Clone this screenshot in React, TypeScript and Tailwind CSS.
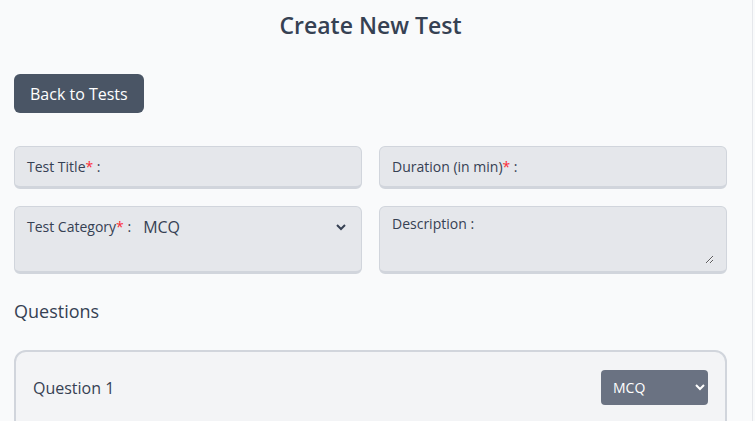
import { useState } from "react";

const Req = () => <span className="text-red-500">*</span>;

export default function App() {
  const [category, setCategory] = useState("MCQ");
  const [qType, setQType] = useState("MCQ");

  return (
    <div
      className="flex h-screen overflow-hidden bg-gray-50"
      style={{ fontFamily: '"Open Sans", "Liberation Sans", sans-serif' }}
    >
      <main className="w-[753px] shrink-0 border-r border-gray-200 pl-[14px] pr-[25px] text-gray-700">
        <h1 className="mt-[9px] text-center text-[23px] leading-8 font-semibold text-gray-700">Create New Test</h1>

        <button className="mt-[33px] h-[39px] rounded-md bg-gray-600 px-4 text-base font-medium text-white">
          Back to Tests
        </button>

        <form className="mt-[33px] grid grid-cols-2 gap-x-[17px] gap-y-[17px]">
          {/* Title */}
          <div className="flex items-center rounded-md border border-b-[3px] border-gray-300 bg-gray-200 px-3">
            <label className="text-sm whitespace-nowrap">
              Test Title<Req /> :
            </label>
            <input className="ml-2 h-[39px] flex-1 outline-none" />
          </div>

          {/* Duration */}
          <div className="flex items-center rounded-md border border-b-[3px] border-gray-300 bg-gray-200 px-3">
            <label className="text-sm whitespace-nowrap">
              Duration (in min)<Req /> :
            </label>
            <input type="number" className="ml-2 h-[39px] flex-1 outline-none" />
          </div>

          {/* Category */}
          <div className="flex items-start rounded-md border border-b-[3px] border-gray-300 bg-gray-200 px-3 pt-[2px]">
            <label className="mt-[8px] text-sm whitespace-nowrap">
              Test Category<Req /> :
            </label>
            <select
              value={category}
              onChange={(e) => setCategory(e.target.value)}
              className="ml-2 h-[36px] flex-1 text-base outline-none"
            >
              <option>MCQ</option>
              <option>Coding</option>
              <option>Mixed</option>
            </select>
          </div>

          {/* Description */}
          <div className="flex items-start rounded-md border border-b-[3px] border-gray-300 bg-gray-200 px-3 pt-[5px] pb-[7px]">
            <label className="mt-[2px] text-sm whitespace-nowrap">Description :</label>
            <textarea className="ml-2 h-[52px] flex-1 outline-none" />
          </div>
        </form>

        <h2 className="mt-[23px] text-lg font-medium">Questions</h2>

        <div className="mt-[25px] rounded-xl border-2 border-gray-300 bg-gray-100 px-[17px] pt-[18px] pb-6">
          <div className="flex items-center justify-between">
            <span className="text-base">Question 1</span>
            <select
              value={qType}
              onChange={(e) => setQType(e.target.value)}
              className="h-[35px] w-[107px] rounded bg-gray-500 px-2 text-sm text-white"
            >
              <option>MCQ</option>
              <option>Coding</option>
            </select>
          </div>
          <div className="h-24" />
        </div>
      </main>
    </div>
  );
}
